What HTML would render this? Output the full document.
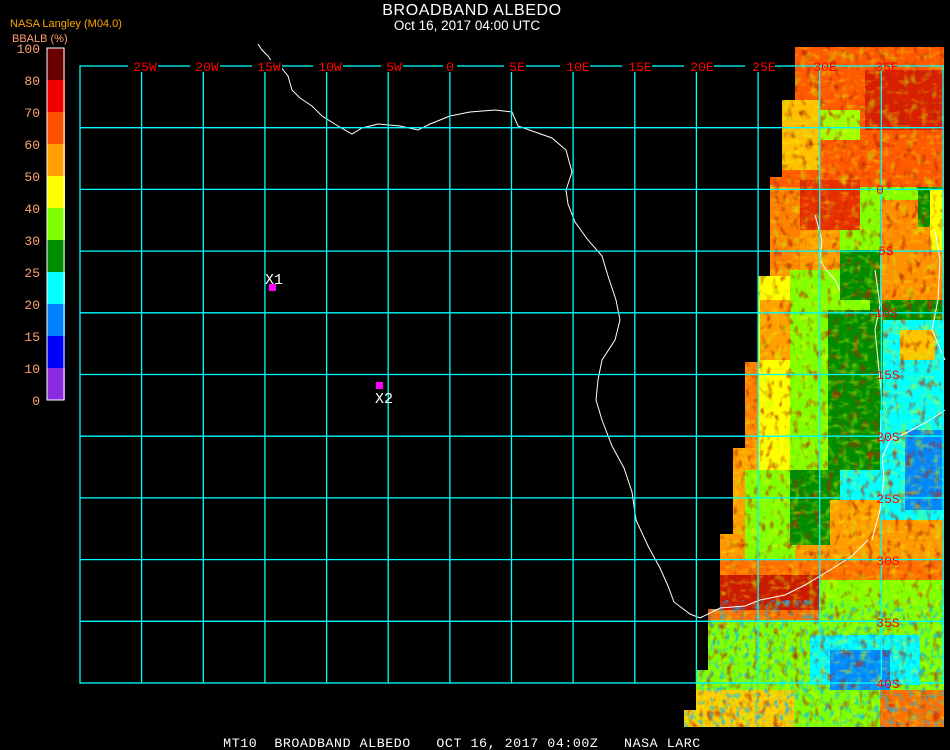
<!DOCTYPE html>
<html><head><meta charset="utf-8"><style>
html,body{margin:0;padding:0;background:#000;width:950px;height:750px;overflow:hidden}
svg{display:block}
text{font-family:"Liberation Mono","DejaVu Sans Mono",monospace}
</style></head><body>
<svg width="950" height="750" xmlns="http://www.w3.org/2000/svg">
<defs>
<clipPath id="dc"><polygon points="795,47 944,47 944,727 684,727 684,710 696,710 696,670 708,670 708,609 720,609 720,534 733,534 733,448 745,448 745,362 758,362 758,276 770,276 770,177 782,177 782,100 795,100"/></clipPath>
<filter id="nz" x="0" y="0" width="100%" height="100%"><feTurbulence type="fractalNoise" baseFrequency="0.15 0.1" numOctaves="2" seed="4"/><feColorMatrix type="matrix" values="0 0 0 0 0.5  0 0 0 0 0.02  0 0 0 0 0  0 0 0 3 -1.6"/></filter>
<filter id="nz2" x="0" y="0" width="100%" height="100%"><feTurbulence type="fractalNoise" baseFrequency="0.12 0.08" numOctaves="2" seed="9"/><feColorMatrix type="matrix" values="0 0 0 0 0.5  0 0 0 0 1  0 0 0 0 0  0 0 0 3 -1.7"/></filter>
<filter id="nz3" x="0" y="0" width="100%" height="100%"><feTurbulence type="fractalNoise" baseFrequency="0.2 0.15" numOctaves="2" seed="2"/><feColorMatrix type="matrix" values="0 0 0 0 0  0 0 0 0 0.5  0 0 0 0 1  0 0 0 3 -1.5"/></filter>
<filter id="nz4" x="0" y="0" width="100%" height="100%"><feTurbulence type="fractalNoise" baseFrequency="0.1 0.2" numOctaves="2" seed="7"/><feColorMatrix type="matrix" values="0 0 0 0 1  0 0 0 0 1  0 0 0 0 0  0 0 0 3 -1.6"/></filter>
</defs>
<g clip-path="url(#dc)">
<rect x="680" y="40" width="270" height="700" fill="#ff9900"/>
<rect x="770" y="47" width="180" height="140" fill="#ff5a00"/>
<rect x="775" y="100" width="45" height="70" fill="#ffc000"/>
<rect x="820" y="110" width="40" height="30" fill="#a0ff00"/>
<rect x="865" y="70" width="80" height="60" fill="#d82000"/>
<rect x="800" y="180" width="60" height="50" fill="#e83000"/>
<rect x="770" y="190" width="30" height="80" fill="#ff8000"/>
<rect x="860" y="187" width="85" height="60" fill="#80ff00"/>
<rect x="880" y="200" width="50" height="70" fill="#ff8a00"/>
<rect x="918" y="187" width="26" height="40" fill="#008c00"/>
<rect x="840" y="230" width="40" height="50" fill="#80ff00"/>
<rect x="930" y="190" width="14" height="60" fill="#ffff00"/>
<rect x="840" y="250" width="40" height="50" fill="#008c00"/>
<rect x="758" y="276" width="62" height="260" fill="#ffff00"/>
<rect x="760" y="300" width="30" height="60" fill="#ffa000"/>
<rect x="790" y="270" width="50" height="230" fill="#80ff00"/>
<rect x="820" y="300" width="60" height="60" fill="#80ff00"/>
<rect x="880" y="250" width="64" height="50" fill="#ff9000"/>
<rect x="870" y="300" width="74" height="30" fill="#008c00"/>
<rect x="880" y="320" width="64" height="90" fill="#00ffff"/>
<rect x="900" y="330" width="35" height="30" fill="#ffc000"/>
<rect x="828" y="310" width="55" height="200" fill="#008c00"/>
<rect x="880" y="410" width="64" height="120" fill="#00ffff"/>
<rect x="905" y="430" width="39" height="80" fill="#0088ff"/>
<rect x="733" y="448" width="25" height="86" fill="#ffa000"/>
<rect x="745" y="362" width="13" height="86" fill="#ff8000"/>
<rect x="745" y="470" width="50" height="90" fill="#80ff00"/>
<rect x="790" y="470" width="40" height="75" fill="#008c00"/>
<rect x="840" y="470" width="50" height="50" fill="#00ffff"/>
<rect x="830" y="500" width="50" height="40" fill="#ffa000"/>
<rect x="880" y="520" width="64" height="40" fill="#ff9900"/>
<rect x="680" y="560" width="270" height="70" fill="#ff7000"/>
<rect x="720" y="575" width="100" height="35" fill="#cc1a00"/>
<rect x="820" y="580" width="124" height="40" fill="#80ff00"/>
<rect x="680" y="620" width="270" height="110" fill="#80ff00"/>
<rect x="810" y="635" width="110" height="50" fill="#00ffff"/>
<rect x="830" y="650" width="60" height="40" fill="#0088ff"/>
<rect x="684" y="690" width="110" height="40" fill="#ffcc00"/>
<rect x="880" y="690" width="64" height="40" fill="#ff7000"/>
<rect x="680" y="40" width="270" height="700" filter="url(#nz)" opacity="0.85"/>
<rect x="680" y="40" width="270" height="700" filter="url(#nz2)" opacity="0.6"/>
<rect x="680" y="40" width="270" height="700" filter="url(#nz4)" opacity="0.4"/>
<rect x="680" y="600" width="270" height="130" filter="url(#nz3)" opacity="0.8"/>
</g>
<g>
<rect x="47" y="48" width="18" height="32" fill="#660000"/>
<rect x="47" y="80" width="18" height="32" fill="#f00000"/>
<rect x="47" y="112" width="18" height="32" fill="#ff5000"/>
<rect x="47" y="144" width="18" height="32" fill="#ffa000"/>
<rect x="47" y="176" width="18" height="32" fill="#ffff00"/>
<rect x="47" y="208" width="18" height="32" fill="#80ff00"/>
<rect x="47" y="240" width="18" height="32" fill="#008c00"/>
<rect x="47" y="272" width="18" height="32" fill="#00ffff"/>
<rect x="47" y="304" width="18" height="32" fill="#0080ff"/>
<rect x="47" y="336" width="18" height="32" fill="#0000ff"/>
<rect x="47" y="368" width="18" height="32" fill="#8a2be2"/>
<rect x="47" y="48" width="17" height="352" fill="none" stroke="#fff" stroke-width="1"/>
</g>
<g fill="#ffa070" font-size="13" text-anchor="end">
<text x="40" y="53">100</text><text x="40" y="85">80</text><text x="40" y="117">70</text><text x="40" y="149">60</text><text x="40" y="181">50</text><text x="40" y="213">40</text><text x="40" y="245">30</text><text x="40" y="277">25</text><text x="40" y="309">20</text><text x="40" y="341">15</text><text x="40" y="373">10</text><text x="40" y="405">0</text>
</g>
<text x="10" y="27" fill="#ffa500" font-size="11" style="font-family:'Liberation Sans',sans-serif">NASA Langley (M04.0)</text>
<text x="12" y="42" fill="#ffa070" font-size="11" style="font-family:'Liberation Sans',sans-serif">BBALB (%)</text>
<text x="472" y="15" fill="#fff" font-size="16" text-anchor="middle" letter-spacing="0.6" style="font-family:'Liberation Sans',sans-serif">BROADBAND ALBEDO</text>
<text x="467" y="30" fill="#fff" font-size="13.5" text-anchor="middle" style="font-family:'Liberation Sans',sans-serif">Oct 16, 2017 04:00 UTC</text>
<polyline fill="none" stroke="#fff" stroke-width="1" points="258,44 262,50 268,56 272,62 280,66 288,76 292,90 300,98 312,106 322,116 338,126 352,134 362,128 378,124 400,126 418,130 430,124 450,116 470,112 495,110 512,112 518,126 535,132 552,138 566,150 572,172 566,190 568,204 575,222 588,240 602,256 608,276 616,300 620,320 615,340 602,360 598,380 596,400 602,420 612,446 624,468 632,492 636,520 648,546 660,568 668,586 674,602 690,614 700,618 720,608 745,606 760,600 785,595 805,585 830,570 852,556 868,540"/>
<polyline fill="none" stroke="#fff" stroke-width="1" points="872,540 880,510 884,478 882,458 890,440 908,432 930,420 945,410"/>
<polyline fill="none" stroke="#fff" stroke-width="1" points="815,215 822,240 820,260 826,270 835,280 840,290"/>
<polyline fill="none" stroke="#fff" stroke-width="1" points="875,270 880,305 875,330 878,360 882,400 880,440"/>
<polyline fill="none" stroke="#fff" stroke-width="1" points="935,230 940,260 938,300 932,330 945,360"/>
<g stroke="#00ffff" stroke-width="1.3" fill="none">
<rect x="80" y="66" width="863" height="617"/>
<path d="M141.6 66V683M203.3 66V683M264.9 66V683M326.6 66V683M388.2 66V683M449.9 66V683M511.5 66V683M573.1 66V683M634.8 66V683M696.4 66V683M758.1 66V683M819.7 66V683M881.4 66V683"/>
<path d="M80 127.7H943M80 189.4H943M80 251.1H943M80 312.8H943M80 374.5H943M80 436.2H943M80 497.9H943M80 559.6H943M80 621.3H943"/>
</g>
<g fill="#000">
<rect x="128" y="60" width="30" height="12"/><rect x="190" y="60" width="30" height="12"/><rect x="252" y="60" width="30" height="12"/><rect x="313" y="60" width="30" height="12"/><rect x="381" y="60" width="22" height="12"/><rect x="443" y="60" width="14" height="12"/><rect x="504" y="60" width="22" height="12"/><rect x="560" y="60" width="30" height="12"/><rect x="622" y="60" width="30" height="12"/><rect x="684" y="60" width="30" height="12"/><rect x="745" y="60" width="30" height="12"/>
</g>
<g fill="#ff0000" font-size="13" text-anchor="middle">
<text x="145" y="71">25W</text><text x="207" y="71">20W</text><text x="269" y="71">15W</text><text x="330" y="71">10W</text><text x="394" y="71">5W</text><text x="450" y="71">0</text><text x="517" y="71">5E</text><text x="578" y="71">10E</text><text x="640" y="71">15E</text><text x="702" y="71">20E</text><text x="764" y="71">25E</text><text x="825" y="71">30E</text><text x="887" y="71">35E</text>
<text x="880" y="194">0</text><text x="886" y="255">5S</text><text x="886" y="317">10S</text><text x="888" y="379">15S</text><text x="888" y="441">20S</text><text x="888" y="503">25S</text><text x="888" y="565">30S</text><text x="888" y="627">35S</text><text x="888" y="688">40S</text>
</g>
<rect x="269" y="284" width="7" height="7" fill="#ff00ff"/>
<text x="265" y="284" fill="#fff" font-size="15">X1</text>
<rect x="376" y="382" width="7" height="7" fill="#ff00ff"/>
<text x="375" y="403" fill="#fff" font-size="15">X2</text>
<text x="462" y="747" fill="#fff" font-size="13.3" text-anchor="middle" letter-spacing="0.55" xml:space="preserve">MT10  BROADBAND ALBEDO   OCT 16, 2017 04:00Z   NASA LARC</text>
</svg>
</body></html>
